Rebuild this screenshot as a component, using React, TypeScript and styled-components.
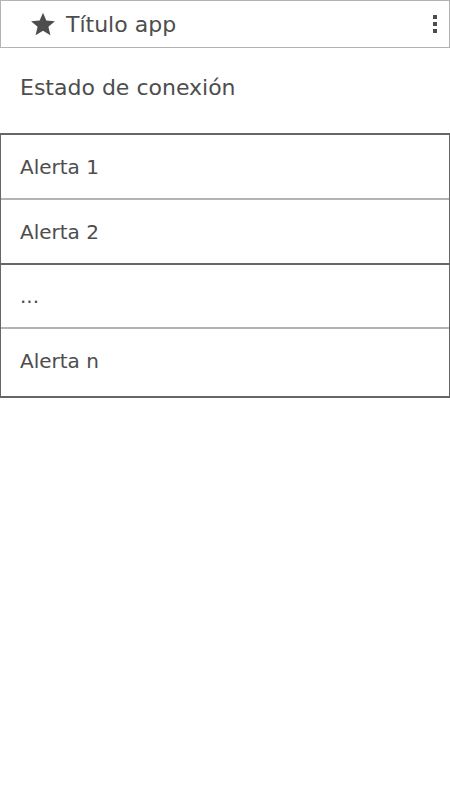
import React from "react";
import styled, { createGlobalStyle } from "styled-components";

const Global = createGlobalStyle`
  html, body { margin: 0; padding: 0; background: #ffffff; }
  body { font-family: "DejaVu Sans", Verdana, sans-serif; color: #4d4d4d; }
`;

const Page = styled.div`
  width: 450px;
  display: flex;
  flex-direction: column;
`;

const Header = styled.header`
  box-sizing: border-box;
  height: 48px;
  border: 1px solid #b3b3b3;
  display: flex;
  align-items: center;
  padding: 0 12px 0 29px;
`;

const Title = styled.h1`
  margin: 0 0 0 10px;
  font-size: 22px;
  font-weight: normal;
  color: #4d4d4d;
  flex: 1;
`;

const Kebab = styled.div`
  display: flex;
  flex-direction: column;
  gap: 3px;
`;

const Dot = styled.span`
  width: 4px;
  height: 4px;
  background: #4d4d4d;
`;

const Status = styled.div`
  box-sizing: border-box;
  height: 85px;
  padding: 27px 20px 0;
  font-size: 22px;
  color: #4d4d4d;
`;

const List = styled.ul`
  list-style: none;
  margin: 0;
  padding: 0;
  border-left: 1px solid #666666;
  border-right: 1px solid #666666;
  border-top: 2px solid #666666;
`;

const Item = styled.li<{ $h: number; $dark?: boolean; $pb?: number }>`
  box-sizing: border-box;
  height: ${(p) => p.$h}px;
  display: flex;
  align-items: center;
  padding: 0 19px ${(p) => p.$pb ?? 0}px;
  font-size: 20px;
  color: #4d4d4d;
  border-bottom: 2px solid ${(p) => (p.$dark ? "#666666" : "#b3b3b3")};
`;

const Star = () => (
  <svg width="26" height="26" viewBox="0 0 24 24">
    <path
      d="M12 1.5l3.1 7.3 7.9.6-6 5.2 1.85 7.7L12 18.2l-6.85 4.1L7 14.6 1 9.4l7.9-.6z"
      fill="#4d4d4d"
    />
  </svg>
);

export default function App() {
  return (
    <Page>
      <Global />
      <Header>
        <Star />
        <Title>Título app</Title>
        <Kebab>
          <Dot />
          <Dot />
          <Dot />
        </Kebab>
      </Header>
      <Status>Estado de conexión</Status>
      <List>
        <Item $h={65}>Alerta 1</Item>
        <Item $h={65} $dark>Alerta 2</Item>
        <Item $h={64}>...</Item>
        <Item $h={69} $pb={4} $dark>Alerta n</Item>
      </List>
    </Page>
  );
}
